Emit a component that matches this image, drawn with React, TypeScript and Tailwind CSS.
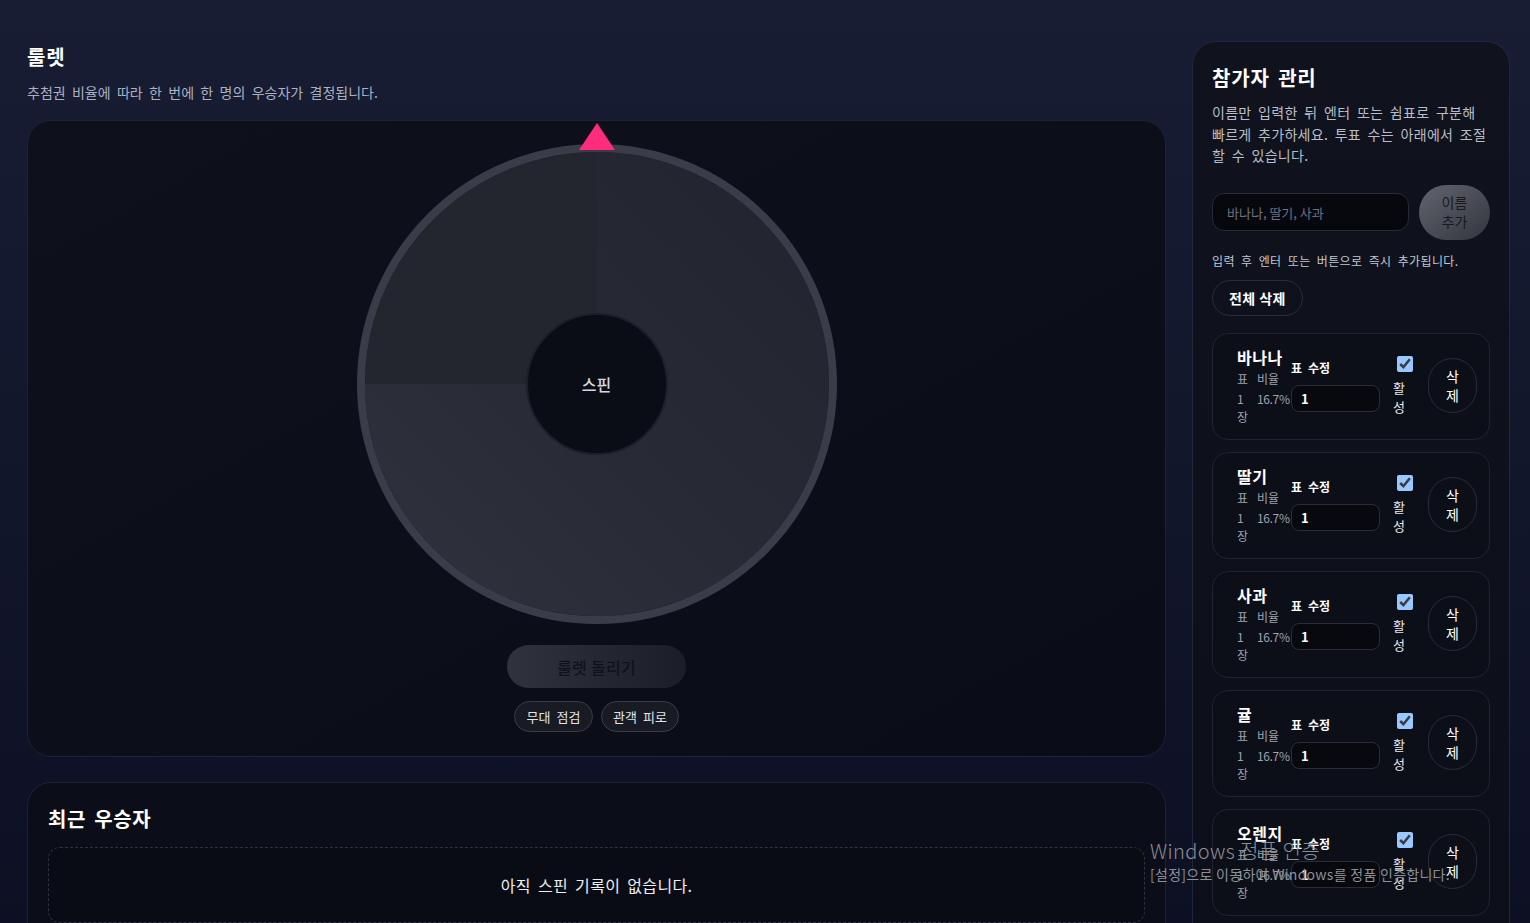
import { useState } from "react";

type Participant = {
  id: number;
  name: string;
  votes: number;
  active: boolean;
};

const initial: Participant[] = [
  { id: 1, name: "바나나", votes: 1, active: true },
  { id: 2, name: "딸기", votes: 1, active: true },
  { id: 3, name: "사과", votes: 1, active: true },
  { id: 4, name: "귤", votes: 1, active: true },
  { id: 5, name: "오렌지", votes: 1, active: true },
  { id: 6, name: "포도", votes: 1, active: true },
];

function Wheel() {
  return (
    <div className="relative h-[480px] w-[480px]">
      <svg width="480" height="480" viewBox="0 0 480 480" className="block">
        <defs>
          <linearGradient id="rest" x1="1" y1="0" x2="0" y2="1">
            <stop offset="0" stopColor="#21232e" />
            <stop offset="0.55" stopColor="#282a35" />
            <stop offset="1" stopColor="#30333e" />
          </linearGradient>
        </defs>
        <path d="M240,240 L240,8 A232,232 0 1,1 8,240 Z" fill="url(#rest)" />
        <path d="M240,240 L8,240 A232,232 0 0,1 240,8 Z" fill="#23252f" />
        <circle cx="240" cy="240" r="236" fill="none" stroke="#3a3d49" strokeWidth="8" />
        <circle cx="240" cy="240" r="70" fill="#0a0d15" stroke="#1d2029" strokeWidth="2" />
      </svg>
      <span className="absolute left-1/2 top-1/2 -translate-x-1/2 -translate-y-1/2 text-base font-medium text-[#d6d8de]">
        스핀
      </span>
      <svg
        width="36"
        height="27"
        viewBox="0 0 36 27"
        className="absolute left-1/2 top-[-21px] -translate-x-1/2"
      >
        <polygon points="18,0 36,27 0,27" fill="#ff2b7b" />
      </svg>
    </div>
  );
}

function ParticipantCard({ p, total }: { p: Participant; total: number }) {
  const ratio = ((p.votes / total) * 100).toFixed(1);
  return (
    <div className="flex items-center rounded-2xl border border-[#202431] bg-[#0c0f18] pb-[13px] pl-6 pr-3 pt-3">
      {/* Name + stats */}
      <div className="w-[54px] shrink-0">
        <p className="whitespace-nowrap text-base font-bold leading-[22px] tracking-[0.03em] text-white">{p.name}</p>
        <div className="mt-[2px] flex gap-2 text-xs leading-[18px] text-[#9ea2ae]">
          <div className="w-3">
            <p>표</p>
            <p className="mt-[2px]">{p.votes} 장</p>
          </div>
          <div>
            <p className="whitespace-nowrap">비율</p>
            <p className="mt-[2px] whitespace-nowrap tracking-[-0.03em]">{ratio}%</p>
          </div>
        </div>
      </div>

      {/* Vote edit */}
      <div className="w-[89px] shrink-0">
        <p className="text-xs font-bold leading-4 text-white">표 수정</p>
        <input
          type="number"
          defaultValue={p.votes}
          className="mt-[9px] h-[27px] w-full rounded-lg border border-[#2a2d38] bg-[#07090e] px-[9px] text-[13px] font-bold text-white outline-none [appearance:textfield] [&::-webkit-inner-spin-button]:appearance-none"
        />
      </div>

      {/* Active */}
      <label className="ml-[13px] flex w-[23px] shrink-0 flex-col text-[13px] leading-[19px] text-[#e8e9ee]">
        <input type="checkbox" defaultChecked={p.active} className="mb-[6px] ml-1 mt-0 h-4 w-4" />
        <span className="w-[14px]">활성</span>
      </label>

      {/* Delete */}
      <button className="ml-3 h-[55px] w-[49px] shrink-0 rounded-full border border-[#2a2d38] px-4 text-sm leading-[19px] text-white">
        삭제
      </button>
    </div>
  );
}

export default function App() {
  const [participants] = useState<Participant[]>(initial);
  const total = participants.filter((p) => p.active).reduce((s, p) => s + p.votes, 0);

  return (
    <div className="relative min-h-screen bg-gradient-to-b from-[#181d34] to-[#0b0e21] font-['Noto_Sans_CJK_KR','Noto_Sans',sans-serif] [color-scheme:dark] [word-spacing:0.2em]">
      <div className="flex gap-[26px] pb-10 pl-[27px] pr-5 pt-[41px]">
        {/* Left column */}
        <main className="w-[1139px] shrink-0">
          <h1 className="mt-[2px] text-xl font-bold leading-7 tracking-[0.04em] text-white">룰렛</h1>
          <p className="mt-[11px] text-sm leading-5 text-[#aab1c3]">
            추첨권 비율에 따라 한 번에 한 명의 우승자가 결정됩니다.
          </p>

          {/* Roulette card */}
          <section className="mt-[18px] flex flex-col items-center rounded-3xl border border-[#1d2131] bg-gradient-to-br from-[#0e111c] to-[#0a0d17] pb-6 pt-[23px]">
            <Wheel />
            <button className="mt-[21px] h-[43px] w-[179px] rounded-full bg-gradient-to-r from-[#30333e] to-[#1b1d27] text-base font-medium tracking-[0.02em] text-[#101218]">
              룰렛 돌리기
            </button>
            <div className="mt-[13px] flex gap-2">
              <span className="flex h-[31px] w-[79px] items-center justify-center rounded-full border border-[#3a3d49] bg-[#191b24] text-[13px] text-[#e3e4e9]">
                무대 점검
              </span>
              <span className="flex h-[31px] w-[78px] items-center justify-center rounded-full border border-[#3a3d49] bg-[#191b24] text-[13px] text-[#e3e4e9]">
                관객 피로
              </span>
            </div>
          </section>

          {/* Recent winners */}
          <section className="mt-[25px] rounded-3xl border border-[#1d2131] bg-[#0b0e18] px-5 pb-6 pt-[22px]">
            <h2 className="text-xl font-bold leading-7 tracking-[0.03em] text-white">최근 우승자</h2>
            <div className="mt-[14px] flex h-[76px] items-center justify-center rounded-xl border border-dashed border-[#2f3341] bg-[#0a0c15]">
              <p className="text-base tracking-[0.02em] text-[#eceef2]">아직 스핀 기록이 없습니다.</p>
            </div>
          </section>
        </main>

        {/* Right panel */}
        <aside className="w-[318px] shrink-0 rounded-3xl border border-[#22263a] bg-gradient-to-b from-[#10131e] to-[#0c0f19] px-[19px] pb-5 pt-[22px]">
          <h2 className="text-xl font-bold leading-7 tracking-[0.04em] text-white">참가자 관리</h2>
          <p className="mt-[10px] text-sm leading-[21.5px] tracking-[0.02em] text-[#b9bdc9]">
            이름만 입력한 뒤 엔터 또는 쉼표로 구분해 빠르게 추가하세요. 투표 수는 아래에서 조절할 수 있습니다.
          </p>

          <div className="mt-[18px] flex items-center gap-[10px]">
            <input
              type="text"
              placeholder="바나나, 딸기, 사과"
              className="h-[38px] w-[197px] rounded-xl border border-[#262a36] bg-[#06080e] px-[14px] text-[13px] text-white outline-none placeholder:text-[#6d7180]"
            />
            <button className="h-[55px] w-[71px] rounded-full bg-gradient-to-br from-[#62656f] to-[#34363e] px-4 text-sm leading-[19px] text-[#17191f]">
              이름 추가
            </button>
          </div>

          <p className="mt-[13px] text-xs leading-4 tracking-[0.03em] text-[#c3c7d1]">
            입력 후 엔터 또는 버튼으로 즉시 추가됩니다.
          </p>

          <button className="mt-[11px] h-9 rounded-full border border-[#2a2e3b] px-4 text-sm font-semibold tracking-[0.03em] text-white">
            전체 삭제
          </button>

          <div className="mt-[17px] flex flex-col gap-3">
            {participants.map((p) => (
              <ParticipantCard key={p.id} p={p} total={total} />
            ))}
          </div>
        </aside>
      </div>

      {/* Windows activation watermark */}
      <div className="pointer-events-none absolute left-[1150px] top-[838px] text-[#8c8f98] [word-spacing:0]">
        <p className="text-[20px] font-light leading-[26px] tracking-[0.02em]">Windows 정품 인증</p>
        <p className="text-sm leading-[20px] tracking-[0.02em]">[설정]으로 이동하여 Windows를 정품 인증합니다.</p>
      </div>
    </div>
  );
}
